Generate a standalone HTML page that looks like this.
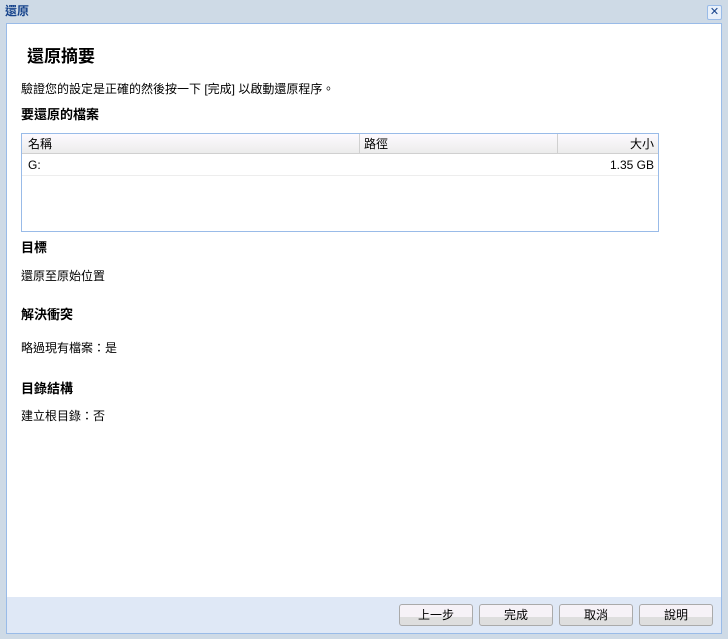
<!DOCTYPE html>
<html><head><meta charset="utf-8"><style>
*{box-sizing:border-box}
body{margin:0;width:728px;height:639px;background:#cedae6;font-family:"Liberation Sans","Noto Sans CJK TC",sans-serif;font-size:12px;color:#000;position:relative;overflow:hidden}
.abs{position:absolute}
.title{left:5px;top:2px;font-weight:bold;color:#15428b;font-size:12px}
.close{left:707px;top:5px;width:15px;height:15px;border:1px solid #99bbe8;background:#e8f0fa;border-radius:2px;color:#15428b;font-size:11px;line-height:13px;text-align:center}
.panel{left:6px;top:23px;width:716px;height:575px;background:#fff;border:1px solid #99bbe8;border-bottom:none}
.foot{left:6px;top:597px;width:716px;height:37px;background:#dfe8f6;border:1px solid #99bbe8;border-top:none}
.h1{left:27px;top:42px;font-size:17px;font-weight:bold}
.h2{font-weight:bold;font-size:13px}
.tbl{left:21px;top:133px;width:638px;height:99px;border:1px solid #99bbe8}
.hd{position:absolute;top:0;height:20px;background:linear-gradient(#fdfaff,#ececec);border-bottom:1px solid #d0d0d0;line-height:20px}
.btn{position:absolute;top:604px;width:74px;height:22px;border:1px solid #aaa;border-radius:3px;background:linear-gradient(#f6f2f7 60%,#dedede 60%);text-align:center;line-height:20px}
</style></head><body>
<div class="abs title">還原</div>
<div class="abs close">✕</div>
<div class="abs panel"></div>
<div class="abs foot"></div>
<div class="abs h1">還原摘要</div>
<div class="abs" style="left:21px;top:80px">驗證您的設定是正確的然後按一下 [完成] 以啟動還原程序。</div>
<div class="abs h2" style="left:21px;top:104px">要還原的檔案</div>
<div class="abs tbl">
<div class="hd" style="left:0;width:338px;border-right:1px solid #d0d0d0;padding-left:6px">名稱</div>
<div class="hd" style="left:338px;width:198px;border-right:1px solid #d0d0d0;padding-left:4px">路徑</div>
<div class="hd" style="left:536px;width:100px;text-align:right;padding-right:4px">大小</div>
<div class="abs" style="left:0;top:20px;width:636px;height:22px;border-bottom:1px solid #ededed;line-height:22px"><span style="margin-left:6px">G:</span><span style="position:absolute;right:4px">1.35 GB</span></div>
</div>
<div class="abs h2" style="left:21px;top:237px">目標</div>
<div class="abs" style="left:21px;top:267px">還原至原始位置</div>
<div class="abs h2" style="left:21px;top:304px">解決衝突</div>
<div class="abs" style="left:21px;top:339px">略過現有檔案：是</div>
<div class="abs h2" style="left:21px;top:378px">目錄結構</div>
<div class="abs" style="left:21px;top:407px">建立根目錄：否</div>
<div class="btn" style="left:399px">上一步</div>
<div class="btn" style="left:479px">完成</div>
<div class="btn" style="left:559px">取消</div>
<div class="btn" style="left:639px">說明</div>
</body></html>
